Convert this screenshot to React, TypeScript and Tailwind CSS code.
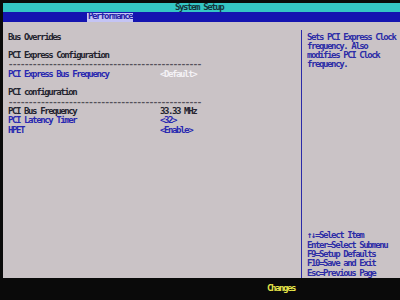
// BIOS-style "System Setup" performance page
const DASHES = "-".repeat(48);

const helpKeys = [
  "\u2191\u2193=Select Item",
  "Enter=Select Submenu",
  "F9=Setup Defaults",
  "F10=Save and Exit",
  "Esc=Previous Page",
];

function Row({
  label,
  value,
  labelClass = "text-[#23232e]",
  valueClass = "text-[#23232e]",
}: {
  label: string;
  value?: string;
  labelClass?: string;
  valueClass?: string;
}) {
  return (
    <div className="flex h-[9.33px]">
      <span className={`w-[152px] whitespace-pre ${labelClass}`}>{label}</span>
      {value && <span className={`whitespace-pre ${valueClass}`}>{value}</span>}
    </div>
  );
}

export default function App() {
  return (
    <div
      className="w-[400px] h-[300px] bg-[#0a0a0a] flex flex-col pl-[3px] pt-[3px] overflow-hidden font-bold text-[9px] leading-[9.33px] tracking-[-1.4px]"
      style={{ fontFamily: '"DejaVu Sans Mono", "Liberation Mono", monospace' }}
    >
      {/* Title bar */}
      <div className="h-[9px] bg-[#34c6c4] flex items-center pl-[172px] text-[#14343a]">
        System Setup
      </div>

      {/* Tab bar */}
      <div className="h-[10px] bg-[#1414b0] flex items-center pl-[84px]">
        <span className="h-[9px] px-[1px] bg-[#c4c4f4] text-[#2020a8] flex items-center">
          Performance
        </span>
      </div>

      {/* Main panel */}
      <div className="h-[256px] bg-[#cac3c6] flex">
        <div className="w-[298px] pl-[5px] pt-[10.5px] flex flex-col">
          <Row label="Bus Overrides" />
          <Row label="" />
          <Row label="PCI Express Configuration" />
          <Row label={DASHES} labelClass="text-[#55525a] w-[200px]" />
          <Row
            label="PCI Express Bus Frequency"
            value="<Default>"
            labelClass="text-[#2828b0]"
            valueClass="text-[#f4f2f6]"
          />
          <Row label="" />
          <Row label="PCI configuration" />
          <Row label={DASHES} labelClass="text-[#55525a] w-[200px]" />
          <Row label="PCI Bus Frequency" value="33.33 MHz" />
          <Row
            label="PCI Latency Timer"
            value="<32>"
            labelClass="text-[#2828b0]"
            valueClass="text-[#2828b0]"
          />
          <Row
            label="HPET"
            value="<Enable>"
            labelClass="text-[#2828b0]"
            valueClass="text-[#2828b0]"
          />
        </div>

        {/* Help panel */}
        <div className="mt-[8px] border-l border-[#2a2aa8] pl-[5px] pt-[2.5px] flex flex-col justify-between text-[#2c2ca6]">
          <div className="flex flex-col">
            <span>Sets PCI Express Clock</span>
            <span>frequency. Also</span>
            <span>modifies PCI Clock</span>
            <span>frequency.</span>
          </div>
          <div className="flex flex-col">
            {helpKeys.map((k) => (
              <span key={k}>{k}</span>
            ))}
          </div>
        </div>
      </div>

      {/* Status bar */}
      <div className="flex-1 flex items-center pl-[264px] text-[#e6e64a]">
        Changes
      </div>
    </div>
  );
}
